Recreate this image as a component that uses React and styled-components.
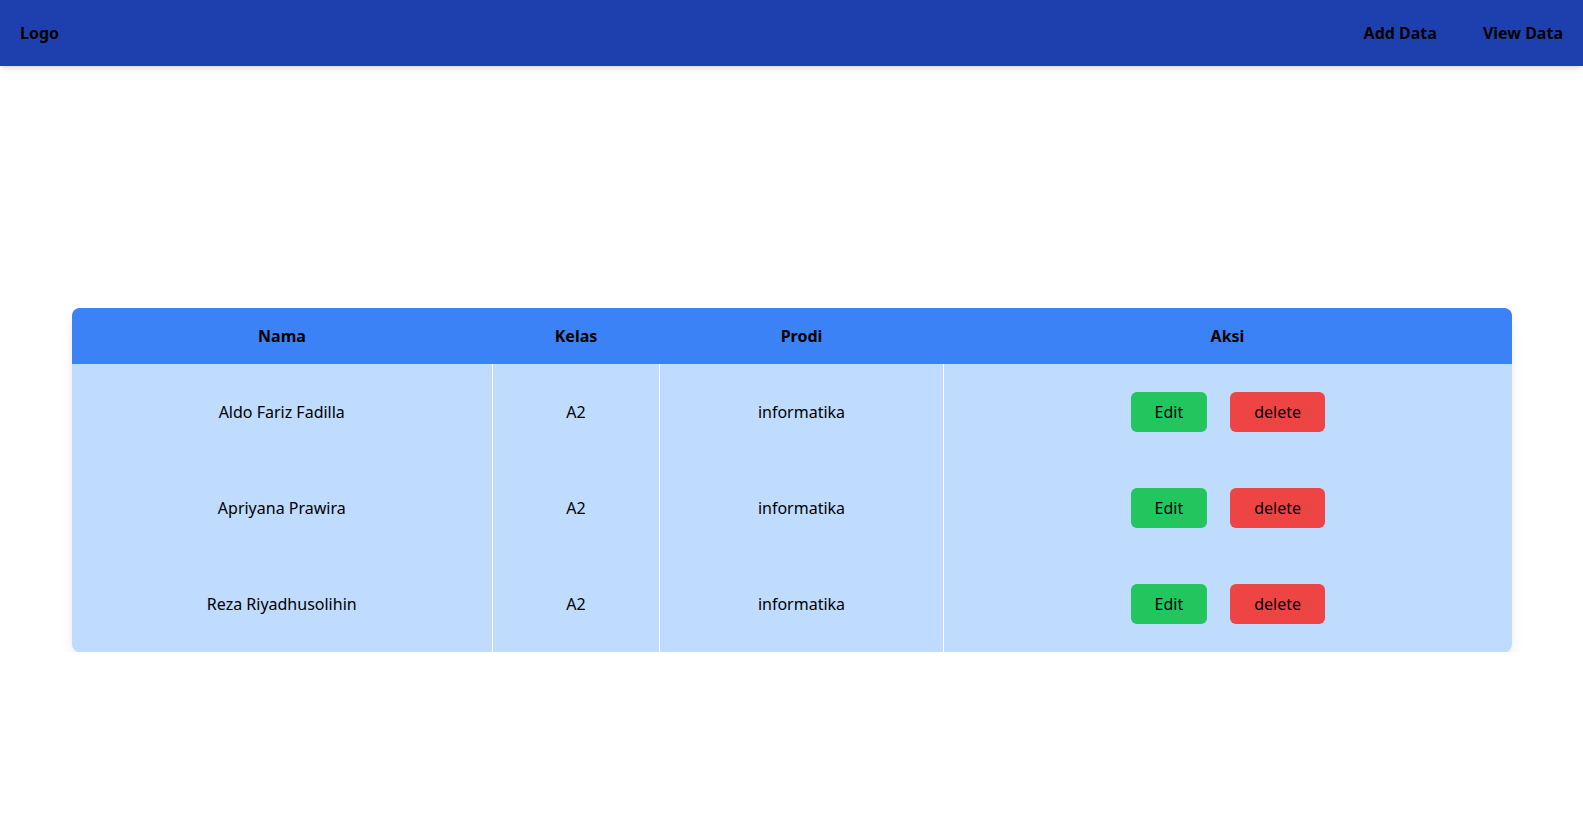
import styled, { createGlobalStyle } from "styled-components";

const GlobalStyle = createGlobalStyle`
  * {
    box-sizing: border-box;
  }
  body {
    margin: 0;
    background: #ffffff;
    font-family: "Noto Sans", "Open Sans", Arial, sans-serif;
    color: #000000;
  }
`;

const Navbar = styled.nav`
  height: 66px;
  padding: 0 20px;
  display: flex;
  align-items: center;
  justify-content: space-between;
  background-color: #1e40af;
  box-shadow: 0 4px 6px -1px rgba(0, 0, 0, 0.1), 0 2px 4px -2px rgba(0, 0, 0, 0.1);
`;

const Brand = styled.div`
  font-size: 16px;
  font-weight: 700;
`;

const NavLinks = styled.div`
  display: flex;
  gap: 46px;
`;

const NavLink = styled.a`
  font-size: 16px;
  font-weight: 700;
  color: #000000;
  text-decoration: none;
  cursor: pointer;
`;

const Main = styled.main`
  padding-top: 242px;
  display: flex;
  justify-content: center;
`;

const TableCard = styled.div`
  width: 1440px;
  border-radius: 8px;
  overflow: hidden;
  background-color: #bfdbfe;
  box-shadow: 0 10px 15px -3px rgba(0, 0, 0, 0.1), 0 4px 6px -4px rgba(0, 0, 0, 0.1);
`;

const Table = styled.table`
  width: 100%;
  border-collapse: collapse;
  table-layout: fixed;
`;

const HeadRow = styled.tr`
  background-color: #3b82f6;
`;

const Th = styled.th`
  height: 56px;
  padding: 0;
  font-size: 16px;
  font-weight: 700;
  text-align: center;
`;

const Td = styled.td`
  height: 96px;
  padding: 0;
  font-size: 16px;
  text-align: center;
  vertical-align: middle;
  & + & {
    border-left: 1px solid #ffffff;
  }
`;

const Actions = styled.div`
  display: flex;
  justify-content: center;
  gap: 23px;
`;

const ActionButton = styled.button`
  height: 40px;
  padding: 0 24px;
  border: none;
  border-radius: 6px;
  font-family: inherit;
  font-size: 16px;
  color: #000000;
  background-color: ${(props) => (props.$danger ? "#ef4444" : "#22c55e")};
  cursor: pointer;
`;

const students = [
  { nama: "Aldo Fariz Fadilla", kelas: "A2", prodi: "informatika" },
  { nama: "Apriyana Prawira", kelas: "A2", prodi: "informatika" },
  { nama: "Reza Riyadhusolihin", kelas: "A2", prodi: "informatika" },
];

const App = () => {
  return (
    <>
      <GlobalStyle />
      <Navbar>
        <Brand>Logo</Brand>
        <NavLinks>
          <NavLink>Add Data</NavLink>
          <NavLink>View Data</NavLink>
        </NavLinks>
      </Navbar>
      <Main>
        <TableCard>
          <Table>
            <colgroup>
              <col style={{ width: 421 }} />
              <col style={{ width: 167 }} />
              <col style={{ width: 284 }} />
              <col style={{ width: 568 }} />
            </colgroup>
            <thead>
              <HeadRow>
                <Th>Nama</Th>
                <Th>Kelas</Th>
                <Th>Prodi</Th>
                <Th>Aksi</Th>
              </HeadRow>
            </thead>
            <tbody>
              {students.map((s) => (
                <tr key={s.nama}>
                  <Td>{s.nama}</Td>
                  <Td>{s.kelas}</Td>
                  <Td>{s.prodi}</Td>
                  <Td>
                    <Actions>
                      <ActionButton>Edit</ActionButton>
                      <ActionButton $danger>delete</ActionButton>
                    </Actions>
                  </Td>
                </tr>
              ))}
            </tbody>
          </Table>
        </TableCard>
      </Main>
    </>
  );
};

export default App;
